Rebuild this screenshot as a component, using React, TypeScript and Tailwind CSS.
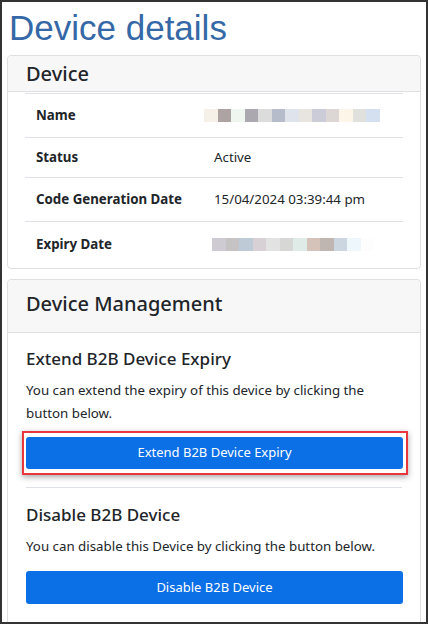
import React from "react";

const pix1 = ["#f6f1e8","#aca3a2","#eff6ef","#aba8b0","#dcdcdc","#b6bcc9","#dfe4ec","#e8e5e0","#cccbd8","#dcd7d5","#fdf6e8","#e0e1dc","#d4e0ef"];
const pix2 = ["#cfcbd2","#c5c3c4","#bfcad7","#d7d0d4","#e2e2e2","#d7d8d5","#dfebe6","#d5c2b8","#bfb5b1","#ccd6e0","#eef8fc","#fdfdfd"];

function Pixels({ colors, shift }: { colors: string[]; shift: string }) {
  return (
    <div className={`flex ${shift}`}>
      {colors.map((c, i) => (
        <div key={i} className="w-[13.5px] h-[13px]" style={{ backgroundColor: c }} />
      ))}
    </div>
  );
}

export default function App() {
  const font = { fontFamily: '"Noto Sans", "Open Sans", sans-serif' };
  return (
    <div className="w-[428px] h-[624px] border-2 border-[#333] bg-white overflow-hidden box-border text-[#212529]" style={font}>
      <h1 className="text-[35px] leading-none text-[#3568a6] pl-[7px] pt-[8px] h-[51px]" style={{ fontFamily: '"Liberation Sans", Arial, sans-serif' }}>
        Device details
      </h1>
      <div className="mx-[5px] mt-[2px] border border-[#dfdfdf] rounded-[4px]">
        <div className="bg-[#f7f7f7] h-[36px] border-b border-[#dfdfdf] px-[18px] flex items-center rounded-t-[4px]">
          <span className="text-[20px] font-medium">Device</span>
        </div>
        <div className="px-[17px] pb-[1px]">
          <div className="border-t border-[#dee2e6] mt-[1px]" />
          {[
            { l: "Name", v: <Pixels colors={pix1} shift="-ml-[10px]" />, h: 44 },
            { l: "Status", v: "Active", h: 40 },
            { l: "Code Generation Date", v: "15/04/2024 03:39:44 pm", h: 44 },
            { l: "Expiry Date", v: <Pixels colors={pix2} shift="-ml-[2px]" />, h: 45, last: true },
          ].map((r, i) => (
            <div key={i} className={`flex items-center text-[13.3px] ${r.last ? "" : "border-b border-[#dee2e6]"}`} style={{ height: r.h }}>
              <div className="w-[189px] pl-[11px] font-bold">{r.l}</div>
              <div>{r.v}</div>
            </div>
          ))}
        </div>
      </div>
      <div className="mx-[5px] mt-[10px] border border-[#dfdfdf] rounded-[4px] h-[400px]">
        <div className="bg-[#f7f7f7] h-[53px] border-b border-[#dfdfdf] px-[18px] pt-[11px] rounded-t-[4px]">
          <div className="text-[20px] font-medium leading-[26px]">Device Management</div>
        </div>
        <div className="px-[18px]">
          <h5 className="text-[17px] font-medium mt-[14px] leading-[24px]">Extend B2B Device Expiry</h5>
          <p className="text-[13.3px] leading-[23px] mt-[8px]">You can extend the expiry of this device by clicking the button below.</p>
          <div className="mt-[6px] -ml-[4px] -mr-[6px] border-2 border-[#e8383d] pl-[2px] pr-[3px] py-[4px] shadow-[0_2px_6px_rgba(0,0,0,0.35)]">
            <button className="w-full h-[32px] bg-[#0b6fe6] text-white text-[13px] rounded-[3px]">Extend B2B Device Expiry</button>
          </div>
          <div className="border-t border-[#dee2e6] mt-[12px]" />
          <h5 className="text-[17px] font-medium mt-[15px] leading-[24px]">Disable B2B Device</h5>
          <p className="text-[13.3px] leading-[23px] mt-[8px]">You can disable this Device by clicking the button below.</p>
          <button className="mt-[13px] w-[377px] h-[33px] bg-[#0b6fe6] text-white text-[13px] rounded-[3px]">Disable B2B Device</button>
        </div>
      </div>
    </div>
  );
}
